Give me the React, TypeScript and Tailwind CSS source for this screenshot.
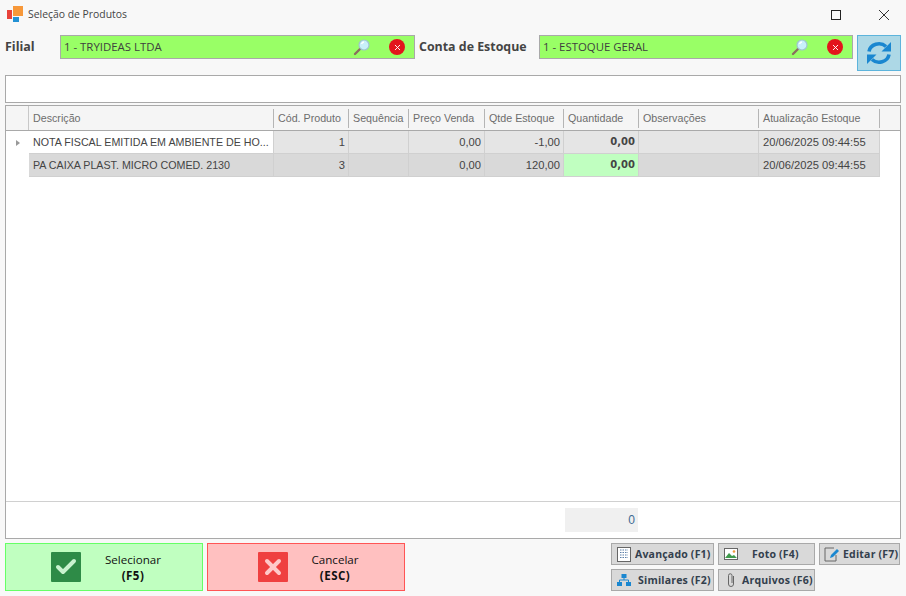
import { Check, X } from "lucide-react";

const body = "font-['Open_Sans',sans-serif]";

const columns = [
  { title: "Descrição", width: "w-[245px]" },
  { title: "Cód. Produto", width: "w-[75px]" },
  { title: "Sequência", width: "w-[60px]" },
  { title: "Preço Venda", width: "w-[76px]" },
  { title: "Qtde Estoque", width: "w-[79px]" },
  { title: "Quantidade", width: "w-[75px]" },
  { title: "Observações", width: "w-[120px]" },
  { title: "Atualização Estoque", width: "w-[121px]" },
];

const rows = [
  ["NOTA FISCAL EMITIDA EM AMBIENTE DE HO...", "1", "", "0,00", "-1,00", "0,00", "", "20/06/2025 09:44:55"],
  ["PA CAIXA PLAST. MICRO COMED. 2130", "3", "", "0,00", "120,00", "0,00", "", "20/06/2025 09:44:55"],
];

const LookupField = ({ text, width }: { text: string; width: string }) => (
  <div className={`${width} h-6 flex items-center bg-[#99ff66] border border-[#a9a9a9] pl-[3px] pr-[9px]`}>
    <span className="flex-1 text-[11.4px] text-[#3f3f3f] font-['Open_Sans',sans-serif]">{text}</span>
    <svg width="18" height="18" viewBox="0 0 18 18" className="mr-[18px]">
      <path d="M2 16 L7 11" stroke="#8a6f5e" strokeWidth="2.4" strokeLinecap="round" />
      <circle cx="11" cy="7" r="5" fill="#c8f0fa" stroke="#9fc4cf" strokeWidth="1.2" />
      <path d="M8.5 6 A3 3 0 0 1 11 4" stroke="#fff" strokeWidth="1.4" fill="none" />
    </svg>
    <span className="w-4 h-4 rounded-full bg-[#e3141c] flex items-center justify-center">
      <X size={9} color="#fff" strokeWidth={2.5} />
    </span>
  </div>
);

const SmallButton = ({ label, width, icon, gap }: { label: string; width: string; icon: React.ReactNode; gap: string }) => (
  <div className={`${width} h-[22px] flex items-center bg-[#d9d9d9] border border-[#a9a9a9] pl-[4px] font-['Open_Sans',sans-serif] text-[10.5px] font-bold text-[#33404d]`}>
    <span className="w-4 h-4 flex items-center justify-center shrink-0">{icon}</span>
    <span className={`${gap} pt-[2px] tracking-[0.2px] whitespace-nowrap`}>{label}</span>
  </div>
);

const BigButton = ({ title, shortcut, box, icon, iconBg, gap }: { title: string; shortcut: string; box: string; icon: React.ReactNode; iconBg: string; gap: string }) => (
  <div className={`w-[198px] h-12 flex items-center border ${box}`}>
    <span className={`w-[30px] h-[30px] rounded-[1px] flex items-center justify-center ${iconBg}`}>{icon}</span>
    <div className={`${gap} w-[70px] pt-[1px] text-center leading-4 text-[#111] text-[11.6px] font-['Open_Sans',sans-serif]`}>
      <div>{title}</div>
      <div className="font-bold text-[11.5px] tracking-[0.5px]">{shortcut}</div>
    </div>
  </div>
);

export default function App() {
  return (
    <div className={`w-[906px] h-[596px] bg-[#f8f8f8] flex flex-col overflow-hidden ${body}`}>
      {/* barra de titulo */}
      <div className="h-[35px] shrink-0 flex items-start pt-[6px] pl-[7px]">
        <svg width="16" height="16" viewBox="0 0 16 16">
          <rect x="0" y="4" width="5" height="9" fill="#e8423a" />
          <rect x="6" y="0" width="10" height="10" fill="#f7983a" />
          <rect x="6" y="11" width="6" height="5" fill="#2391d4" />
        </svg>
        <span className="ml-[5px] text-[10.4px] leading-[16px] text-[#444]">Seleção de Produtos</span>
        <div className="ml-auto flex items-center pt-[3px] pr-4">
          <span className="w-[10px] h-[10px] border border-[#222] mr-[37px]" />
          <svg width="12" height="12" viewBox="0 0 12 12">
            <path d="M1 1 L11 11 M11 1 L1 11" stroke="#333" strokeWidth="1" />
          </svg>
        </div>
      </div>

      {/* filtros */}
      <div className="h-10 shrink-0 flex items-start pl-[5px]">
        <span className="w-[55px] h-6 leading-6 text-[12.5px] font-bold text-[#444]">Filial</span>
        <LookupField text="1 - TRYIDEAS LTDA" width="w-[355px]" />
        <span className="ml-[4px] w-[120px] h-6 leading-6 text-[12.4px] font-bold text-[#444] whitespace-nowrap">Conta de Estoque</span>
        <LookupField text="1 - ESTOQUE GERAL" width="w-[314px]" />
        <div className="ml-[4px] w-11 h-9 bg-[#add8e6] border border-[#5db4dc] flex items-center justify-center">
          <svg width="26" height="24" viewBox="0 0 26 24">
            <path d="M3 10.5 A10 9 0 0 1 20 5.5" fill="none" stroke="#1a87d0" strokeWidth="3.6" />
            <path d="M25 1 V10.5 H15.5 Z" fill="#1a87d0" />
            <path d="M23 13.5 A10 9 0 0 1 6 18.5" fill="none" stroke="#1a87d0" strokeWidth="3.6" />
            <path d="M1 23 V13.5 H10.5 Z" fill="#1a87d0" />
          </svg>
        </div>
      </div>

      {/* busca */}
      <div className="mx-[5px] h-7 shrink-0 bg-white border border-[#a9a9a9]" />

      {/* grade */}
      <div className="mx-[5px] mt-[2px] h-[434px] shrink-0 bg-white border border-[#a9a9a9] flex flex-col font-['Liberation_Sans',sans-serif] text-[10.7px]">
        <div className="h-[25px] shrink-0 flex border-b border-[#a9a9a9] bg-[#f5f5f5] text-[#6d6d6d]">
          <div className="w-[23px] border-r border-[#c8c8c8]" />
          {columns.map((c) => (
            <div key={c.title} className={`${c.width} h-[19px] mt-[3px] border-r border-[#b5b5b5] pl-1 leading-[19px] whitespace-nowrap overflow-hidden`}>
              {c.title}
            </div>
          ))}
        </div>
        <div className="flex-1">
          {rows.map((row, r) => (
            <div key={r} className="h-[23px] flex">
              <div className="w-[23px] flex items-center justify-center">
                {r === 0 && <span className="w-0 h-0 border-y-[3.5px] border-y-transparent border-l-[4px] border-l-[#999]" />}
              </div>
              {row.map((cell, i) => {
                const isText = i === 0;
                const isQty = i === 5;
                let bg = r === 0 ? "bg-[#e5e5e5]" : "bg-[#d9d9d9]";
                if (r === 0 && i === 0) bg = "bg-white";
                if (r === 1 && isQty) bg = "bg-[#c0ffc0]";
                let type = "text-[11.2px]";
                if (isText) type = "text-[10.7px]";
                if (isQty) type = "font-['DejaVu_Sans',sans-serif] font-bold text-[10px] text-[#333]";
                return (
                  <div
                    key={i}
                    className={`${columns[i].width} ${bg} border-r border-b border-[#d0d0d0] pl-1 pr-[3px] leading-[22px] text-[#444] whitespace-nowrap overflow-hidden ${isText || i === 7 ? "text-left" : "text-right"} ${type}`}
                  >
                    {cell}
                  </div>
                );
              })}
            </div>
          ))}
        </div>
        <div className="h-[37px] shrink-0 border-t border-[#d0d0d0] pt-[6px] pl-[559px]">
          <div className="w-[73px] h-6 bg-[#f0f0f0] pr-[3px] text-right leading-6 text-[12px] text-[#3d6a93]">0</div>
        </div>
      </div>

      {/* botoes */}
      <div className="mt-1 mx-[5px] flex items-start">
        <BigButton
          title="Selecionar"
          shortcut="(F5)"
          box="bg-[#c0ffc0] border-[#66ff66] pl-[45px]"
          iconBg="bg-[#2e8b47]"
          gap="ml-[17px]"
          icon={<Check size={24} color="#c9f3cf" strokeWidth={4} />}
        />
        <BigButton
          title="Cancelar"
          shortcut="(ESC)"
          box="ml-1 bg-[#ffc0c0] border-[#ff5555] pl-[50px]"
          iconBg="bg-[#ef4040]"
          gap="ml-[12px]"
          icon={<X size={24} color="#ffc9c9" strokeWidth={4} />}
        />
        <div className="ml-auto grid grid-cols-[103px_97px_81px] gap-x-1 gap-y-1 w-[289px] mr-[1px]">
          <SmallButton
            label="Avançado (F1)"
            width="w-[103px]"
            gap="ml-[3px]"
            icon={
              <svg width="14" height="15" viewBox="0 0 14 15">
                <rect x=".5" y=".5" width="13" height="14" fill="#fff" stroke="#666" />
                <path d="M3 3h8M3 5.5h8M3 8h8M3 10.5h8" stroke="#5b7fa8" strokeDasharray="1.5 1" />
              </svg>
            }
          />
          <SmallButton
            label="Foto (F4)"
            width="w-[97px]"
            gap="ml-[13px]"
            icon={
              <svg width="14" height="12" viewBox="0 0 14 12">
                <rect x=".5" y=".5" width="13" height="11" fill="#fff" stroke="#666" />
                <path d="M1 10 L5 5 L8 8 L10 7 L13 10 Z" fill="#3f9a4c" />
                <circle cx="10" cy="3.5" r="1.3" fill="#f09a3c" />
              </svg>
            }
          />
          <SmallButton
            label="Editar (F7)"
            width="w-[81px]"
            gap="ml-[3px]"
            icon={
              <svg width="16" height="15" viewBox="0 0 16 15">
                <path d="M10 1H1v13h11V8" fill="none" stroke="#666" />
                <path d="M6 11 L7 8 L13 2 L15 4 L9 10 Z" fill="#1a87d0" />
              </svg>
            }
          />
          <SmallButton
            label="Similares (F2)"
            width="w-[103px]"
            gap="ml-[6px]"
            icon={
              <svg width="14" height="12" viewBox="0 0 14 12">
                <rect x="4.5" y="0" width="5" height="4" fill="#1a87d0" />
                <rect x="0" y="8" width="5" height="4" fill="#1a87d0" />
                <rect x="9" y="8" width="5" height="4" fill="#1a87d0" />
                <path d="M7 4v2M2.5 8V6h9v2" fill="none" stroke="#1a87d0" />
              </svg>
            }
          />
          <SmallButton
            label="Arquivos (F6)"
            width="w-[97px]"
            gap="ml-[3px]"
            icon={
              <svg width="10" height="16" viewBox="0 0 10 16">
                <path d="M7.5 4v8a2.5 2.5 0 0 1-5 0V3.5a1.7 1.7 0 0 1 3.5 0V11" fill="none" stroke="#666" strokeWidth="1" />
              </svg>
            }
          />
        </div>
      </div>
    </div>
  );
}
